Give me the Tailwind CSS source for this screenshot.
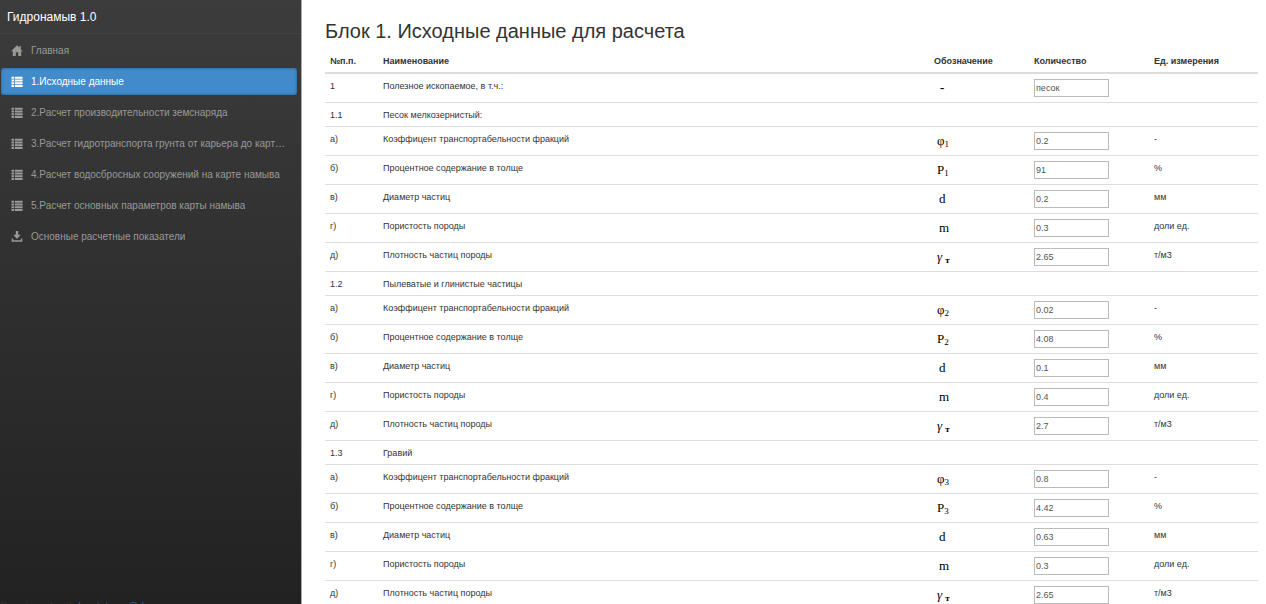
<!DOCTYPE html>
<html lang="ru">
<head>
<meta charset="utf-8">
<title>Гидронамыв 1.0</title>
<script src="https://cdn.jsdelivr.net/npm/@tailwindcss/browser@4"></script>
</head>
<body class="flex h-screen overflow-hidden bg-white font-['Liberation_Sans',Arial,sans-serif] text-[#333]">
<svg class="hidden">
  <symbol id="home" viewBox="0 0 12 12"><path d="M6 .2 11.8 6.200H10.200V11H7.200V7.200H4.800V11H1.800V6.200H.2ZM8.300 1H9.800V5H8.300Z"/></symbol>
  <symbol id="list" viewBox="0 0 12 12"><path d="M.5 .8h2.700v2H.5zM4 .8h7.600v2H4zM.5 3.500h2.700v2H.5zM4 3.500h7.600v2H4zM.5 6.200h2.700v2H.5zM4 6.200h7.600v2H4zM.5 8.900h2.700v2H.5zM4 8.900h7.600v2H4z"/></symbol>
  <symbol id="save" viewBox="0 0 12 12"><path d="M4.800 0h2.400v3.800h2.500L6 7.900 2.300 3.800h2.500zM.7 7.500h1.500v1.700h7.600V7.500h1.500v3.300H.7z"/></symbol>
</svg>
<aside class="flex w-[302px] shrink-0 flex-col overflow-hidden border-r border-[#aaa] bg-linear-to-b from-[#3c3c3c] to-[#222]">
  <div class="flex h-[34px] shrink-0 items-center border-b border-[#424242] px-[7px] text-xs text-white">Гидронамыв 1.0</div>
  <nav class="flex flex-col gap-1 pt-[3px] pr-1 pl-px text-[10px] text-[#999]" id="nav"></nav>
  <p class="mt-[348px] shrink-0 whitespace-nowrap text-[11px] leading-4 text-[#333]">Developed with <a href="#" class="text-[#2a5d8c]">bootstrap @ b</a></p>
</aside>
<main class="min-w-0 grow pt-[18px] pr-2 pl-[23px]">
  <h1 class="text-xl leading-[26px]">Блок 1. Исходные данные для расчета</h1>
  <table class="mt-1 w-full table-fixed border-collapse text-left text-[9px]">
    <colgroup><col class="w-[53px]"><col><col class="w-[100px]"><col class="w-[120px]"><col class="w-[109px]"></colgroup>
    <thead><tr class="h-[25px] border-b-2 border-[#ddd]"><th class="px-[5px] pt-1">№п.п.</th><th class="px-[5px] pt-1">Наименование</th><th class="px-[5px] pt-1">Обозначение</th><th class="px-[5px] pt-1">Количество</th><th class="px-[5px] pt-1">Ед. измерения</th></tr></thead>
    <tbody id="rows"></tbody>
  </table>
</main>
<script>
const nav = [['home','Главная'],['list','1.Исходные данные'],['list','2.Расчет производительности земснаряда'],['list','3.Расчет гидротранспорта грунта от карьера до карты намыва'],['list','4.Расчет водосбросных сооружений на карте намыва'],['list','5.Расчет основных параметров карты намыва'],['save','Основные расчетные показатели']];
document.getElementById('nav').innerHTML = nav.map(([icon,text],i)=>`<a href="#" class="flex h-[27px] items-center gap-2 rounded-[3px] px-[10px] ${i===1?'bg-[#428bca] text-white shadow-[inset_0_0_3px_#245580]':''}"><svg class="size-3 shrink-0 fill-current"><use href="#${icon}"/></svg><span class="truncate">${text}</span></a>`).join('');
const names = ['Коэффицент транспортабельности фракций','Процентное содержание в толще','Диаметр частиц','Пористость породы','Плотность частиц породы'];
const letters = ['а)','б)','в)','г)','д)'], units = ['-','%','мм','доли ед.','т/м3'];
const groups = [['Песок мелкозернистый:',[0.2,91,0.2,0.3,2.65]],['Пылеватые и глинистые частицы',[0.02,4.08,0.1,0.4,2.7]],['Гравий',[0.8,4.42,0.63,0.3,2.65]]];
const row = (n,name,sym,val,unit) => `<tr class="h-[29px] border-b border-[#ddd] align-top"><td class="px-[5px] pt-[5px] leading-[14px]">${n}</td><td class="px-[5px] pt-[5px] leading-[14px]">${name}</td><td class="px-[8px] pt-[6px] font-['Liberation_Serif',serif] text-[13px] leading-[16px] text-black">${sym}</td><td class="px-[5px] pt-[5px]"><input aria-label="${name}" value="${val}" class="block h-[18px] w-[75px] border border-[#bbb] px-px text-[9px] text-[#555]"></td><td class="px-[5px] pt-[5px] leading-[14px]">${unit}</td></tr>`;
let html = row('1','Полезное ископаемое, в т.ч.:','<b class="px-[3px]">-</b>','песок','');
groups.forEach(([title,vals],g)=>{
  html += `<tr class="h-[24px] border-b border-[#ddd]"><td class="px-[5px] pt-[3px]">1.${g+1}</td><td class="px-[5px] pt-[3px]">${title}</td><td></td><td></td><td></td></tr>`;
  const syms = [`φ<sub class="text-[9px]">${g+1}</sub>`,`P<sub class="text-[9px]">${g+1}</sub>`,'<span class="pl-[2px]">d</span>','<span class="pl-[2px]">m</span>','<i>γ</i><sub class="pl-[3px] text-[9px] font-bold">т</sub>'];
  vals.forEach((v,i)=>{ html += row(letters[i],names[i],syms[i],v,units[i]); });
});
document.getElementById('rows').innerHTML = html;
</script>
</body>
</html>
